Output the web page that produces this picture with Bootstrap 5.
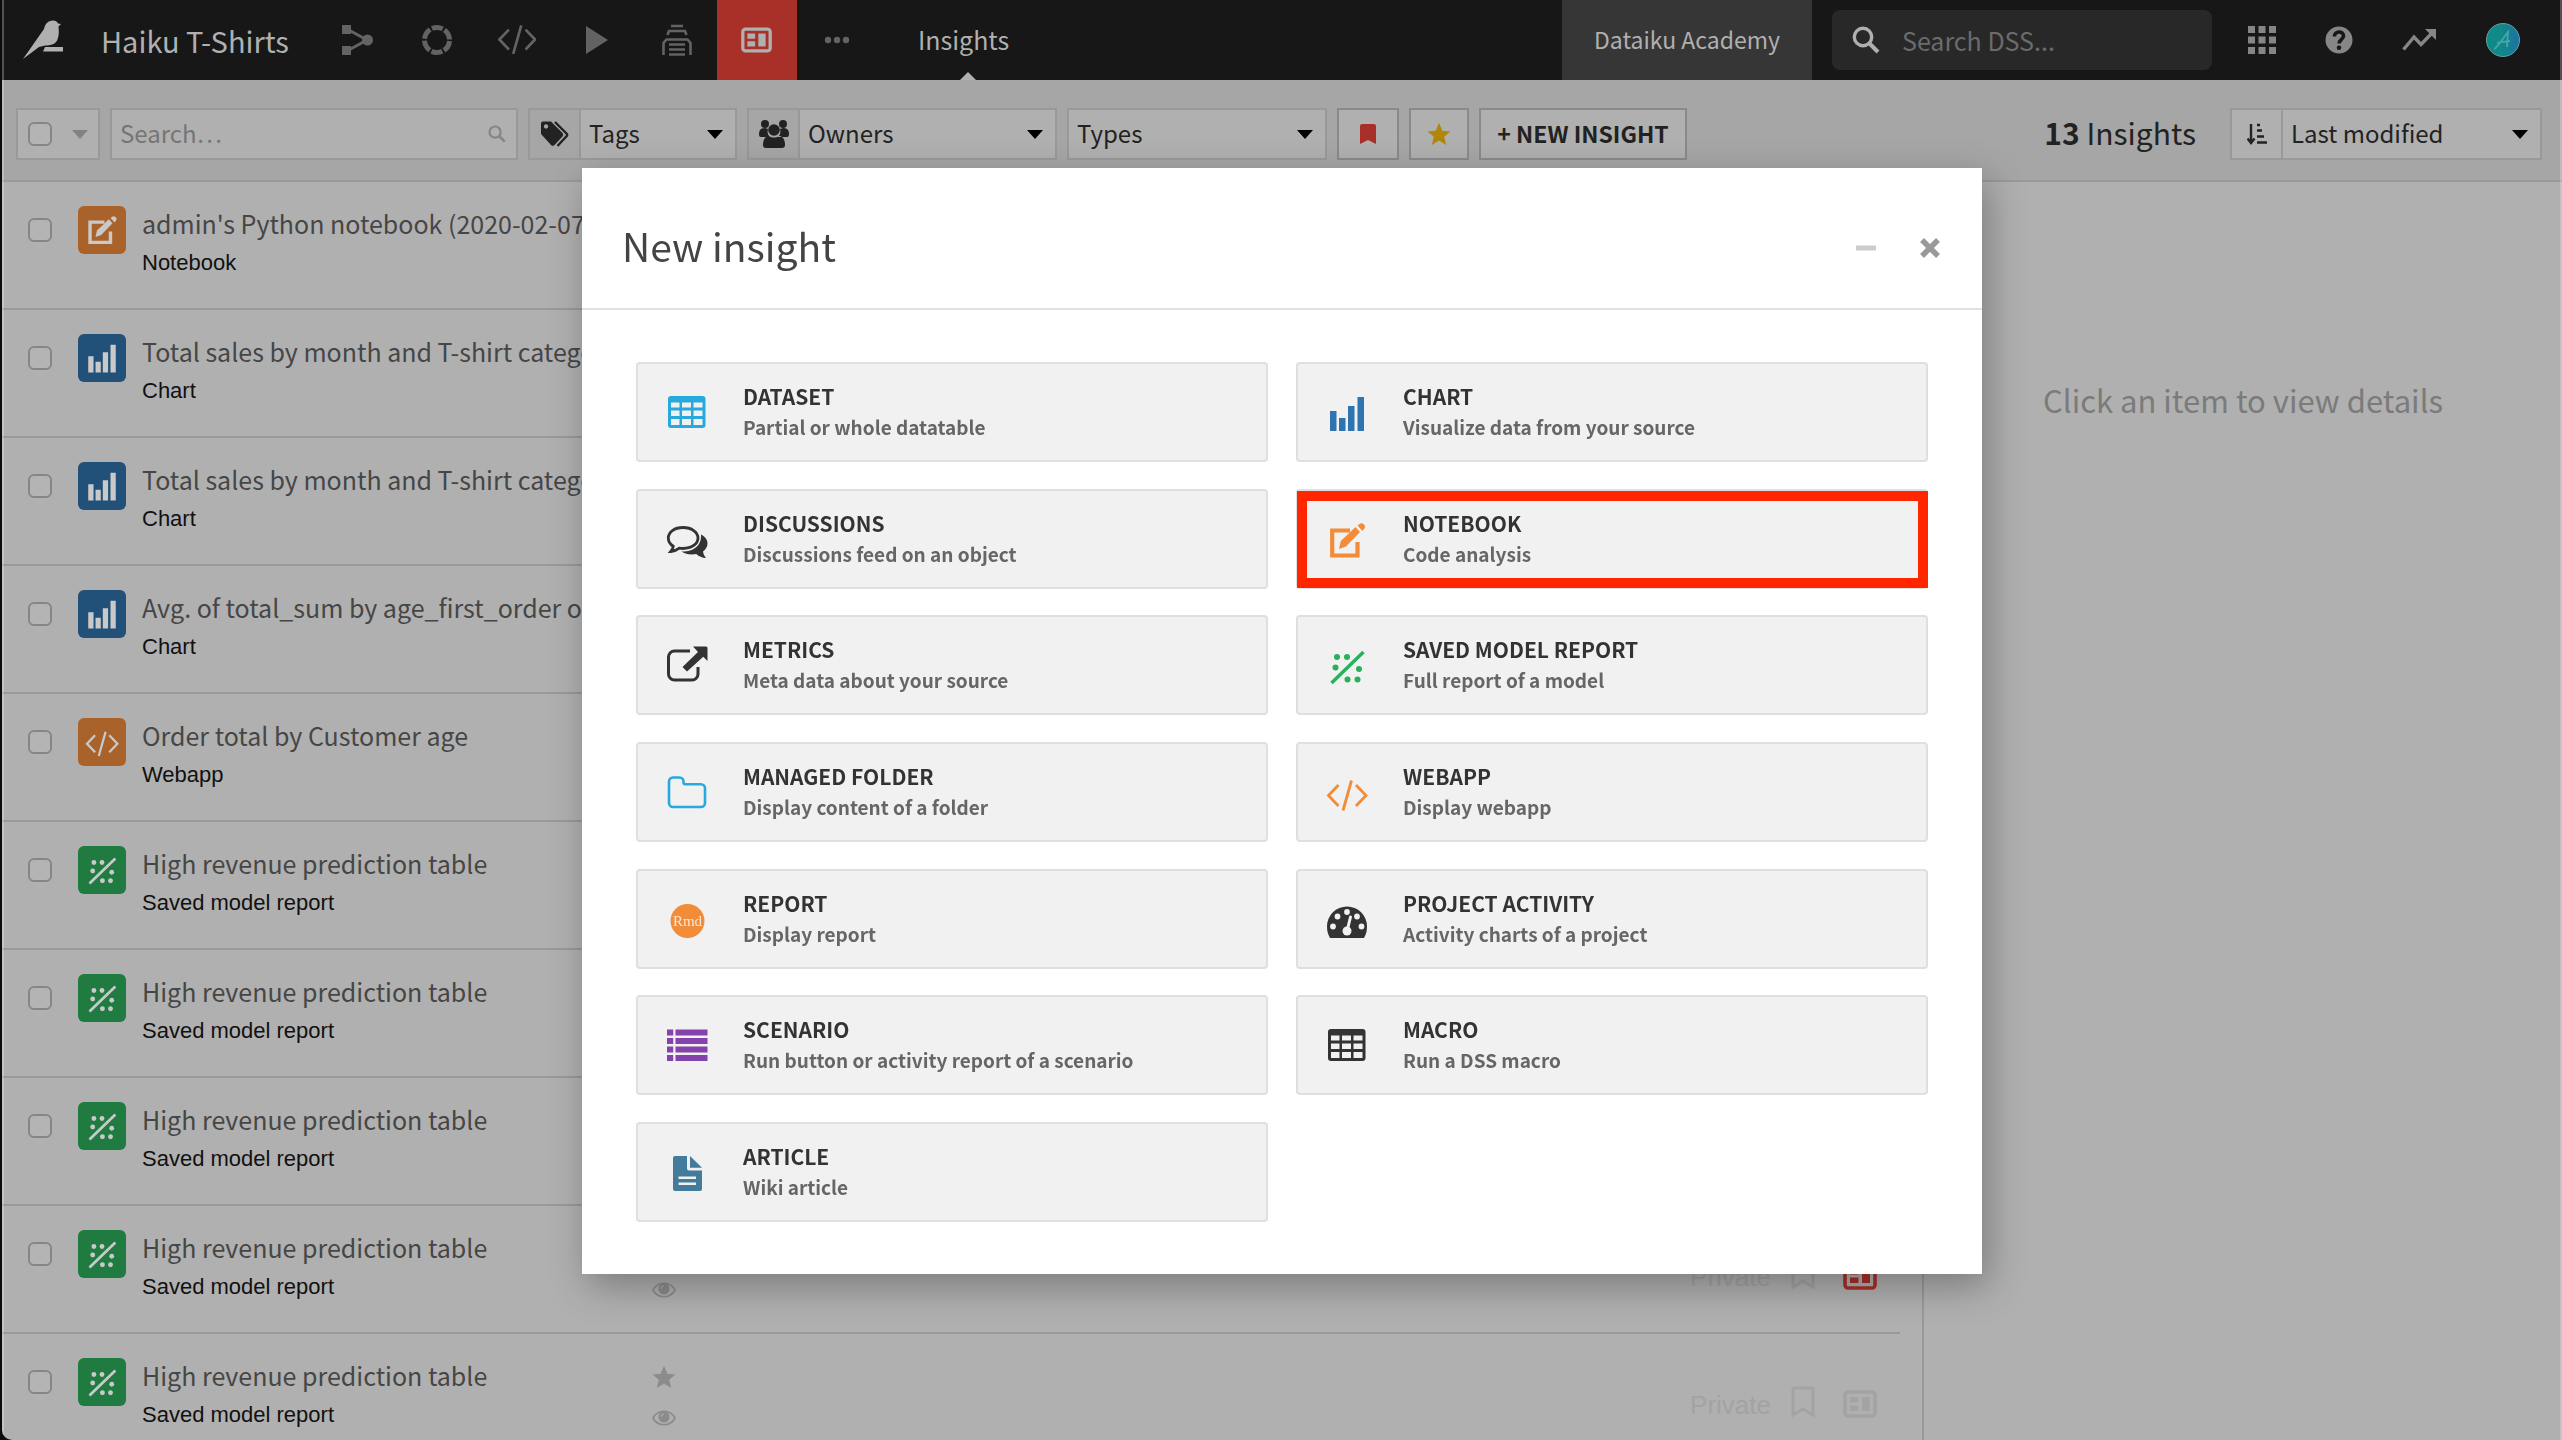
<!DOCTYPE html>
<html lang="en">
<head>
<meta charset="utf-8">
<meta name="viewport" content="width=device-width, initial-scale=1">
<title>Haiku T-Shirts - Insights</title>
<link href="https://cdn.jsdelivr.net/npm/bootstrap@5.3.0/dist/css/bootstrap.min.css" rel="stylesheet">
<style>
:root{--ui:"Noto Sans CJK SC","Noto Sans",sans-serif;--plain:"Liberation Sans",Arial,sans-serif;--line:#999;--pane:#b0b0b0;--bar:#a6a6a6;--ink:#222;--soft:#464646;--bright:#b0b0b0;--dim:#636363;--orange:#f28c38;--blue:#2e75b0;--green:#28b15c}
body{margin:0;background:#0c0c0c;font-family:var(--ui);color:var(--ink);overflow:hidden}
svg{display:block;flex:none}
.shell{position:relative;height:100vh;margin-left:2px;background:var(--pane);overflow:hidden;border-bottom-left-radius:10px}
.shell::after{content:"";position:absolute;inset:0;border:solid rgba(255,255,255,.25);border-width:0 2px;pointer-events:none}
/* top bar */
.topbar{height:80px;background:#171717;color:var(--bright);padding:0}
.topbar a{color:inherit;text-decoration:none}
.brand-link{padding:0 28px 0 20px;gap:37px;font-size:29px;line-height:40px}
.tab-link{width:80px;height:80px;color:var(--dim)!important}
.tab-link.current{background:#a93028;color:var(--bright)!important}
.section-link{position:relative;margin-left:41px;font-size:25px;line-height:78px;height:80px}
.section-link::after{content:"";position:absolute;left:50%;bottom:0;margin-left:-4px;border:8px solid transparent;border-top:0;border-bottom-color:var(--bright)}
.academy{background:#363636;padding:0 32px;font-size:23px;line-height:78px;height:80px}
.dss-search{width:380px;height:60px;margin:0 36px 0 20px;padding:0 20px;gap:22px;background:#282828;border-radius:8px}
.dss-search input,.find-box input{background:transparent;border:0;outline:0;padding:0;min-width:0;color:var(--ink);font-family:var(--ui)}
.dss-search input{font-size:25px;line-height:36px;color:var(--bright)}
.dss-search input::placeholder{color:#6b6b6b;opacity:1}
.tool-links{gap:49px;padding-right:41px;color:#868686}
/* filter bar */
.filterbar{background:var(--bar);padding:28px 20px 20px 14px;gap:10px;border-bottom:2px solid var(--line)}
.ctl{height:52px;border:2px solid var(--line);background:var(--pane);border-radius:0;color:var(--ink);font-size:24px;line-height:36px;font-family:var(--ui);padding:0}
.ctl.strong-edge{border-color:#8a8a8a}
.pick-all{gap:20px;padding:0 10px}
.find-box{width:408px;padding:0 10px 0 8px}
.find-box input{font-size:24px;line-height:36px;padding-bottom:2px}
.find-box input::placeholder{color:#757575;opacity:1}
.addon{width:51px;background:var(--bar);border-right:0}
.pick{appearance:none;padding:0 40px 2px 8px;background:var(--pane) url("data:image/svg+xml,%3Csvg xmlns='http://www.w3.org/2000/svg' viewBox='0 0 16 9'%3E%3Cpath d='M0 0h16L8 9z'/%3E%3C/svg%3E") no-repeat right 12px center/16px 9px}
.tick{appearance:none;flex:none;width:24px;height:24px;margin:0;border:2px solid #868686;border-radius:6px;background:#b4b4b4}
.new-btn{width:208px;font-size:23px;font-weight:700;line-height:36px;padding-bottom:2px}
.total{font-size:30px;line-height:44px;margin-right:24px;padding-bottom:4px}
/* list */
.main-row{height:calc(100vh - 182px)}
.items{padding:0 22px 0 0}
.item{height:128px;border-bottom:2px solid var(--line);padding:24px 23px 0 26px}
.item .tick{margin-top:12px}
.tile{width:48px;height:48px;border-radius:6px;color:#c9c9c9;margin-left:26px;padding-top:6px}
.t-orange{background:#a9622a}.t-blue{background:#215079}.t-green{background:#207b41}
.item-text{width:510px;margin-left:16px}
.item-name{font-size:25px;line-height:34px;color:var(--soft);text-decoration:none;display:block}
.item-kind{font-family:var(--plain);font-size:22px;line-height:46px;color:#111}
.marks{color:#8b8b8b;padding-top:7px;gap:21px}
.states{font-family:var(--plain);font-size:26px;line-height:26px;color:#a3a3a3;padding-top:28px;gap:20px}
.details{border-left:2px solid var(--line);padding-top:196px;font-size:31px;line-height:44px;color:#7b7b7b}
/* dialog */
.modal{padding-left:2px;overflow:hidden}
.modal-dialog{max-width:1400px;margin:168px auto 0}
.modal-content{border:0;border-radius:0;box-shadow:6px 12px 36px rgba(0,0,0,.3);color:#333}
.modal-header{height:142px;padding:20px 42px 0 40px;border-bottom:2px solid #e0e0e0;border-radius:0}
.modal-title{font-size:39px;font-weight:400;line-height:56px;color:#444;padding-bottom:6px}
.head-btn{background:none;border:0;padding:0;color:#999}
.head-btns{gap:44px}
.kinds{display:grid;grid-template-columns:1fr 1fr;column-gap:28px;align-content:space-between;min-height:860px;margin:52px 54px}
.kind{position:relative;height:100px;border:2px solid #dfdfdf;border-radius:4px;background:#f1f1f1;padding:0 28px;gap:35px;text-align:left;color:#333}
.kind-text{padding-bottom:2px}
.kind-name{font-size:21px;line-height:32px;font-weight:700}
.kind-note{font-size:19px;line-height:30px;font-weight:700;color:#666}
.kind.picked::after{content:"";position:absolute;inset:0 -2px -1px -1px;border:10px solid #ff2600}
.c-sky{color:#28a9dd}.c-blue{color:var(--blue)}.c-orange{color:var(--orange)}.c-green{color:var(--green)}.c-purple{color:#8541ac}.c-teal{color:#437c9b}
</style>
<script src="https://cdn.jsdelivr.net/npm/bootstrap@5.3.0/dist/js/bootstrap.bundle.min.js"></script>
</head>
<body>
<svg width="0" height="0" class="position-absolute" aria-hidden="true">
  <symbol id="edit" viewBox="0 0 42 42"><path d="M24 12.500H6.200V37.500H31.500V24" fill="none" stroke="currentColor" stroke-width="4.200"/><path d="M13 31l1.800-8L29.500 9l4.500 5L20 28.500z" fill="currentColor"/><path d="M31.500 7.500l1.500-1a3.200 3.200 0 0 1 5 4.500l-1.500 2z" fill="currentColor"/></symbol>
  <symbol id="bars" viewBox="0 0 42 42"><path d="M4 20h6.500v20H4zM13 27h6.500v13H13zM22 15h6.500v25H22zM31.500 6H38v34h-6.500z" fill="currentColor"/></symbol>
  <symbol id="code" viewBox="0 0 42 42"><path d="M12.500 14L2.500 24.500l10 10.500M30 14l10 10.500L30 35M25.500 9.500L17 39.500" fill="none" stroke="currentColor" stroke-width="2.800"/></symbol>
  <symbol id="model" viewBox="0 0 42 42"><path d="M5.500 39L37.500 8" stroke="currentColor" stroke-width="3.400"/><g fill="currentColor"><circle cx="11" cy="13" r="3"/><circle cx="21" cy="13" r="3"/><circle cx="9.500" cy="23.500" r="3"/><circle cx="33" cy="25" r="3"/><circle cx="21.500" cy="35.500" r="3"/><circle cx="31.500" cy="35.500" r="3"/></g></symbol>
  <symbol id="grid" viewBox="0 0 42 42"><path fill-rule="evenodd" fill="currentColor" d="M5 5h31.500a3 3 0 0 1 3 3v26a3 3 0 0 1-3 3H5a3 3 0 0 1-3-3V8a3 3 0 0 1 3-3zM5 11.500v5h8.500v-5zm11 0v5h9v-5zm11.500 0v5h9v-5zM5 19.500V25h8.500v-5.500zm11 0V25h9v-5.500zm11.500 0V25h9v-5.500zM5 28v6h8.500v-6zm11 0v6h9v-6zm11.500 0v6h9v-6z"/></symbol>
  <symbol id="talk" viewBox="0 0 42 42"><path d="M17 9.500c8.500 0 15 4.600 15 10.500S25.500 30.500 17 30.500c-1.300 0-2.500-.1-3.700-.3C11 32 8 33.400 4.800 33.500c1.300-1.500 2.300-3 2.500-5.300C4 26.300 2.300 23.400 2.300 20 2.300 14.100 8.500 9.500 17 9.500z" fill="none" stroke="currentColor" stroke-width="2.800"/><path d="M35 16.500c4 2 6.500 5.200 6.500 9 0 3.500-2 6-4.500 8 .3 2.500 1.500 4.500 3 6.500-4-.2-7-1.500-9.700-4-6 1-11 0-14.800-2.500C26 34 36 28.500 35 16.500z" fill="currentColor"/></symbol>
  <symbol id="share" viewBox="0 0 42 42"><path d="M24 7H8.500A6 6 0 0 0 2.500 13v17a6 6 0 0 0 6 6H26a6 6 0 0 0 6-6v-7" fill="none" stroke="currentColor" stroke-width="3"/><path d="M27 2.500h13a1.500 1.500 0 0 1 1.500 1.500v13l-4.200-4.200L21 27.500 16.500 23 32 8z" fill="currentColor"/></symbol>
  <symbol id="folder" viewBox="0 0 42 42"><path d="M7 6.500h6.500a4 4 0 0 1 4 4v1.200a1.500 1.500 0 0 0 1.500 1.500h16a4 4 0 0 1 4 4V32a4 4 0 0 1-4 4H7a4 4 0 0 1-4-4V10.500a4 4 0 0 1 4-4z" fill="none" stroke="currentColor" stroke-width="2.600"/></symbol>
  <symbol id="gauge" viewBox="0 0 42 42"><path d="M21 8.500a20 20 0 0 1 20 20c0 4.500-1 8-3 11.500H4c-2-3.500-3-7-3-11.500a20 20 0 0 1 20-20z" fill="currentColor"/><g fill="#f1f1f1"><circle cx="7" cy="28.500" r="2.900"/><circle cx="11.500" cy="18.500" r="2.900"/><circle cx="21" cy="14" r="2.900"/><circle cx="31" cy="18.500" r="2.900"/><circle cx="35.500" cy="28.500" r="2.900"/><circle cx="21" cy="33" r="4.500"/></g><path d="M21.500 31l3-12" stroke="#f1f1f1" stroke-width="3" stroke-linecap="round"/></symbol>
  <symbol id="rows" viewBox="0 0 42 42"><path d="M1 5.500h6.200v6H1zM9.500 5.500h32v6h-32zM1 14h6.200v6H1zM9.500 14h32v6h-32zM1 22.500h6.200v6H1zM9.500 22.500h32v6h-32zM1 31h6.200v6H1zM9.500 31h32v6h-32z" fill="currentColor"/></symbol>
  <symbol id="page" viewBox="0 0 42 42"><path fill-rule="evenodd" fill="currentColor" d="M9 5h12v12.500a2 2 0 0 0 2 2h13V38a2 2 0 0 1-2 2H9a2 2 0 0 1-2-2V7a2 2 0 0 1 2-2zM12.500 25.500V28H30v-2.500zm0 6V34H30v-2.500zM24 5l12 11.800H24z"/></symbol>
  <symbol id="board" viewBox="0 0 34 28"><rect x="2" y="2" width="30" height="24" rx="3" fill="none" stroke="currentColor" stroke-width="3.600"/><path d="M7 7h8.500v5.500H7zM7 15.500h8.500V21H7zM19 7h8v14h-8z" fill="currentColor"/></symbol>
  <symbol id="star" viewBox="0 0 24 24"><path d="M12 .8l3.300 7.900 8.200.7-6.300 5.400 2 8.200-7.200-4.500L4.800 23l2-8.200L.500 9.400l8.200-.7z" fill="currentColor"/></symbol>
  <symbol id="eye" viewBox="0 0 24 16"><path d="M1 8c5-9 17-9 22 0-5 9-17 9-22 0z" fill="none" stroke="currentColor" stroke-width="1.600"/><circle cx="12" cy="7" r="5.600" fill="currentColor"/><path d="M9 7a3 3 0 0 1 3-3" stroke="#b0b0b0" fill="none"/></symbol>
  <symbol id="ribbon" viewBox="0 0 24 32"><path d="M2 29V4a2 2 0 0 1 2-2h16a2 2 0 0 1 2 2v25l-10-6z" fill="none" stroke="currentColor" stroke-width="3"/></symbol>
  <symbol id="lens" viewBox="0 0 28 28"><circle cx="11" cy="11" r="8.700" fill="none" stroke="currentColor" stroke-width="3.400"/><path d="M17 17l9 9" stroke="currentColor" stroke-width="4"/></symbol>
</svg>

<div class="shell d-flex flex-column">
  <nav class="topbar d-flex align-items-center flex-shrink-0" aria-label="Main">
    <a href="#" class="brand-link d-flex align-items-center">
      <svg width="42" height="40" viewBox="0 0 42 40"><path d="M1 39L22 9c1-5 4-8.500 9-8.500 3 0 4.500 1.500 5 3l3 .5-2.500 2.500c.5 5 .5 9-1 13C34 24 29 25.500 23 25.500L17 27z" fill="currentColor"/><path d="M23 27h18v4.500H21z" fill="currentColor"/></svg>
      <span>Haiku T-Shirts</span>
    </a>
    <a href="#" class="tab-link d-flex align-items-center justify-content-center" aria-label="Flow"><svg width="36" height="32" viewBox="0 0 36 32"><path d="M3 1h9v9H3zM3 22h9v9H3z" fill="currentColor"/><circle cx="28.500" cy="16" r="5.500" fill="currentColor"/><path d="M8 5l20 11L8 27" fill="none" stroke="currentColor" stroke-width="3"/></svg></a>
    <a href="#" class="tab-link d-flex align-items-center justify-content-center" aria-label="Lab"><svg width="32" height="32" viewBox="0 0 32 32"><circle cx="16" cy="16" r="12.500" fill="none" stroke="currentColor" stroke-width="5" stroke-dasharray="11.090 2" stroke-dashoffset="-1"/></svg></a>
    <a href="#" class="tab-link d-flex align-items-center justify-content-center" aria-label="Notebooks"><svg width="38" height="38" viewBox="1 5 40 40"><use href="#code" width="42" height="42"/></svg></a>
    <a href="#" class="tab-link d-flex align-items-center justify-content-center" aria-label="Jobs"><svg width="22" height="28" viewBox="0 0 22 28"><path d="M0 0l22 14L0 28z" fill="currentColor"/></svg></a>
    <a href="#" class="tab-link d-flex align-items-center justify-content-center" aria-label="Deployer"><svg width="30" height="32" viewBox="0 0 30 32"><path d="M9 2h12M5.500 11l1.500-4h16l1.500 4M1.500 31V19l3-3.500h21l3 3.500v12M7 20.500h16M7 25.500h16M7 30.500h16" fill="none" stroke="currentColor" stroke-width="2.600"/></svg></a>
    <a href="#" class="tab-link current d-flex align-items-center justify-content-center" aria-label="Dashboards"><svg width="31" height="26"><use href="#board"/></svg></a>
    <a href="#" class="tab-link d-flex align-items-center justify-content-center" aria-label="More"><svg width="26" height="8" viewBox="0 0 26 8" fill="currentColor"><circle cx="4" cy="4" r="3.200"/><circle cx="13" cy="4" r="3.200"/><circle cx="22" cy="4" r="3.200"/></svg></a>
    <a href="#" class="section-link" aria-current="page">Insights</a>
    <a href="#" class="academy ms-auto">Dataiku Academy</a>
    <div class="dss-search d-flex align-items-center"><svg width="28" height="28"><use href="#lens"/></svg><input type="search" placeholder="Search DSS..." aria-label="Search DSS"></div>
    <div class="tool-links d-flex align-items-center">
      <a href="#" aria-label="Applications"><svg width="28" height="28" viewBox="0 0 28 28" fill="currentColor"><path d="M0 0h7v7H0zM10.500 0h7v7h-7zM21 0h7v7h-7zM0 10.500h7v7H0zM10.500 10.500h7v7h-7zM21 10.500h7v7h-7zM0 21h7v7H0zM10.500 21h7v7h-7zM21 21h7v7h-7z"/></svg></a>
      <a href="#" aria-label="Help"><svg width="28" height="28" viewBox="0 0 28 28"><circle cx="14" cy="14" r="13.500" fill="currentColor"/><path d="M9.500 10.500c0-6 9-6 9-.5 0 3.500-4.300 3.500-4.300 7.500" fill="none" stroke="#171717" stroke-width="3.600"/><circle cx="14" cy="21.800" r="2.300" fill="#171717"/></svg></a>
      <a href="#" aria-label="Activity"><svg width="34" height="22" viewBox="0 0 34 22"><path d="M1.500 20.500L12 8l7 7.500L30 4" fill="none" stroke="currentColor" stroke-width="3.400"/><path d="M23 0h11v11z" fill="currentColor"/></svg></a>
      <a href="#" aria-label="Profile"><svg width="36" height="36" viewBox="0 0 36 36"><defs><linearGradient id="av"><stop offset=".4" stop-color="#0f8a86"/><stop offset="1" stop-color="#1d72a4"/></linearGradient></defs><circle cx="18" cy="18" r="16.500" fill="url(#av)" stroke="#6b9c9c" stroke-width="1"/><path d="M9 27c4-2 9-11 14-17l-1 15M12 21c5-2 8-1 13-2" fill="none" stroke="#4aa5a8" stroke-width="1.800"/></svg></a>
    </div>
  </nav>

  <div class="filterbar d-flex align-items-center flex-shrink-0">
    <div class="ctl pick-all d-flex align-items-center"><input type="checkbox" class="tick" aria-label="Select all"><svg width="16" height="9" viewBox="0 0 16 9"><path d="M0 0h16L8 9z" fill="#828282"/></svg></div>
    <div class="ctl find-box d-flex align-items-center"><input class="flex-fill" type="search" placeholder="Search…" aria-label="Search insights"><svg width="18" height="18" color="#858585"><use href="#lens"/></svg></div>
    <div class="d-flex">
      <label for="tags" class="ctl addon d-flex align-items-center justify-content-center" aria-label="Tags"><svg width="30" height="26" viewBox="0 0 30 26"><path fill-rule="evenodd" d="M1 2.500A2 2 0 0 1 3 .5h8L22.500 12a2.500 2.500 0 0 1 0 3.500l-8 8.500a2.500 2.500 0 0 1-3.500 0L1 13zM6 3.300a2.200 2.200 0 1 0 .1 0z" fill="#222"/><path d="M15 1l11.500 11.500a2 2 0 0 1 0 2.800L17.500 25" fill="none" stroke="#222" stroke-width="2.400"/></svg></label>
      <select id="tags" class="ctl pick" style="width:158px"><option>Tags</option></select>
    </div>
    <div class="d-flex">
      <label for="owners" class="ctl addon d-flex align-items-center justify-content-center" aria-label="Owners"><svg width="32" height="28" viewBox="0 0 32 28" fill="#222"><circle cx="7" cy="4" r="4"/><circle cx="25" cy="4" r="4"/><circle cx="16" cy="10" r="5.800"/><path d="M1 14c0-4 2-6 6-6l3 1c-1 4 0 6 2 8H3c-1.500 0-2-1-2-3zM31 14c0-4-2-6-6-6l-3 1c1 4 0 6-2 8h9c1.500 0 2-1 2-3zM5 25c0-5 2-9 6-9 3 2 7 2 10 0 4 0 6 4 6 9 0 2-1 3-3 3H8c-2 0-3-1-3-3z"/></svg></label>
      <select id="owners" class="ctl pick" style="width:259px"><option>Owners</option></select>
    </div>
    <select class="ctl pick" style="width:260px" aria-label="Types"><option>Types</option></select>
    <button type="button" class="ctl strong-edge d-flex align-items-center justify-content-center" style="width:62px" aria-label="Promoted"><svg width="16" height="20" viewBox="0 0 16 20"><path d="M0 20V2a2 2 0 0 1 2-2h12a2 2 0 0 1 2 2v18l-8-4z" fill="#a93028"/></svg></button>
    <button type="button" class="ctl strong-edge d-flex align-items-center justify-content-center" style="width:60px" aria-label="Starred"><svg width="24" height="24" color="#b18609"><use href="#star"/></svg></button>
    <button type="button" class="ctl strong-edge new-btn">+ NEW INSIGHT</button>
    <div class="total ms-auto"><b>13</b> Insights</div>
    <div class="d-flex">
      <button type="button" class="ctl addon border-end-0 d-flex align-items-center justify-content-center" style="background:var(--pane)" aria-label="Sort order"><svg width="20" height="22" viewBox="0 0 20 22"><path d="M4 1v18M.500 15.500L4 20l3.500-4.500M10 2h3M10 7.500h5M10 13.500h7M10 19.500h10" fill="none" stroke="#222" stroke-width="2.400"/></svg></button>
      <select class="ctl pick" style="width:261px" aria-label="Sort by"><option>Last modified</option></select>
    </div>
  </div>

  <div class="row g-0 main-row">
    <main class="items col-9">
      <div class="item d-flex align-items-start"><input type="checkbox" class="tick" aria-label="Select"><div class="tile t-orange d-flex justify-content-center"><svg width="34" height="34"><use href="#edit"/></svg></div><div class="item-text"><a href="#" class="item-name text-truncate">admin's Python notebook (2020-02-07)</a><div class="item-kind">Notebook</div></div></div>
      <div class="item d-flex align-items-start"><input type="checkbox" class="tick" aria-label="Select"><div class="tile t-blue d-flex justify-content-center"><svg width="34" height="34"><use href="#bars"/></svg></div><div class="item-text"><a href="#" class="item-name text-truncate">Total sales by month and T-shirt category</a><div class="item-kind">Chart</div></div></div>
      <div class="item d-flex align-items-start"><input type="checkbox" class="tick" aria-label="Select"><div class="tile t-blue d-flex justify-content-center"><svg width="34" height="34"><use href="#bars"/></svg></div><div class="item-text"><a href="#" class="item-name text-truncate">Total sales by month and T-shirt category</a><div class="item-kind">Chart</div></div></div>
      <div class="item d-flex align-items-start"><input type="checkbox" class="tick" aria-label="Select"><div class="tile t-blue d-flex justify-content-center"><svg width="34" height="34"><use href="#bars"/></svg></div><div class="item-text"><a href="#" class="item-name text-truncate">Avg. of total_sum by age_first_order on</a><div class="item-kind">Chart</div></div></div>
      <div class="item d-flex align-items-start"><input type="checkbox" class="tick" aria-label="Select"><div class="tile t-orange d-flex justify-content-center"><svg width="34" height="34"><use href="#code"/></svg></div><div class="item-text"><a href="#" class="item-name text-truncate">Order total by Customer age</a><div class="item-kind">Webapp</div></div></div>
      <div class="item d-flex align-items-start"><input type="checkbox" class="tick" aria-label="Select"><div class="tile t-green d-flex justify-content-center"><svg width="34" height="34"><use href="#model"/></svg></div><div class="item-text"><a href="#" class="item-name text-truncate">High revenue prediction table</a><div class="item-kind">Saved model report</div></div></div>
      <div class="item d-flex align-items-start"><input type="checkbox" class="tick" aria-label="Select"><div class="tile t-green d-flex justify-content-center"><svg width="34" height="34"><use href="#model"/></svg></div><div class="item-text"><a href="#" class="item-name text-truncate">High revenue prediction table</a><div class="item-kind">Saved model report</div></div></div>
      <div class="item d-flex align-items-start"><input type="checkbox" class="tick" aria-label="Select"><div class="tile t-green d-flex justify-content-center"><svg width="34" height="34"><use href="#model"/></svg></div><div class="item-text"><a href="#" class="item-name text-truncate">High revenue prediction table</a><div class="item-kind">Saved model report</div></div></div>
      <div class="item d-flex align-items-start"><input type="checkbox" class="tick" aria-label="Select"><div class="tile t-green d-flex justify-content-center"><svg width="34" height="34"><use href="#model"/></svg></div><div class="item-text"><a href="#" class="item-name text-truncate">High revenue prediction table</a><div class="item-kind">Saved model report</div></div>
        <div class="marks d-flex flex-column"><svg width="24" height="24"><use href="#star"/></svg><svg width="24" height="16"><use href="#eye"/></svg></div>
        <div class="states ms-auto d-flex align-items-end"><span>Private</span><svg width="24" height="32"><use href="#ribbon"/></svg><svg class="ms-2" width="34" height="28" color="#a93028"><use href="#board"/></svg></div></div>
      <div class="item d-flex align-items-start"><input type="checkbox" class="tick" aria-label="Select"><div class="tile t-green d-flex justify-content-center"><svg width="34" height="34"><use href="#model"/></svg></div><div class="item-text"><a href="#" class="item-name text-truncate">High revenue prediction table</a><div class="item-kind">Saved model report</div></div>
        <div class="marks d-flex flex-column"><svg width="24" height="24"><use href="#star"/></svg><svg width="24" height="16"><use href="#eye"/></svg></div>
        <div class="states ms-auto d-flex align-items-end"><span>Private</span><svg width="24" height="32"><use href="#ribbon"/></svg><svg class="ms-2" width="34" height="28"><use href="#board"/></svg></div></div>
    </main>
    <aside class="details col-3 text-center">Click an item to view details</aside>
  </div>
</div>

<div class="modal d-block" role="dialog" aria-labelledby="dlg-title">
  <div class="modal-dialog">
    <div class="modal-content">
      <div class="modal-header d-flex align-items-center">
        <h1 class="modal-title" id="dlg-title">New insight</h1>
        <div class="head-btns d-flex align-items-center">
          <button type="button" class="head-btn" aria-label="Minimize"><svg width="20" height="20" viewBox="0 0 20 20"><path d="M0 7.500h20v5H0z" fill="#ccc"/></svg></button>
          <button type="button" class="head-btn" aria-label="Close"><svg width="20" height="20" viewBox="0 0 20 20"><path d="M2 2l16 16M18 2L2 18" stroke="currentColor" stroke-width="5.500"/></svg></button>
        </div>
      </div>
      <div class="kinds">
        <button type="button" class="kind d-flex align-items-center"><svg class="c-sky" width="42" height="42"><use href="#grid"/></svg><span class="kind-text"><span class="kind-name d-block">DATASET</span><span class="kind-note d-block">Partial or whole datatable</span></span></button>
        <button type="button" class="kind d-flex align-items-center"><svg class="c-blue" width="42" height="42"><use href="#bars"/></svg><span class="kind-text"><span class="kind-name d-block">CHART</span><span class="kind-note d-block">Visualize data from your source</span></span></button>
        <button type="button" class="kind d-flex align-items-center"><svg width="42" height="42"><use href="#talk"/></svg><span class="kind-text"><span class="kind-name d-block">DISCUSSIONS</span><span class="kind-note d-block">Discussions feed on an object</span></span></button>
        <button type="button" class="kind picked d-flex align-items-center"><svg class="c-orange" width="42" height="42"><use href="#edit"/></svg><span class="kind-text"><span class="kind-name d-block">NOTEBOOK</span><span class="kind-note d-block">Code analysis</span></span></button>
        <button type="button" class="kind d-flex align-items-center"><svg width="42" height="42"><use href="#share"/></svg><span class="kind-text"><span class="kind-name d-block">METRICS</span><span class="kind-note d-block">Meta data about your source</span></span></button>
        <button type="button" class="kind d-flex align-items-center"><svg class="c-green" width="42" height="42"><use href="#model"/></svg><span class="kind-text"><span class="kind-name d-block">SAVED MODEL REPORT</span><span class="kind-note d-block">Full report of a model</span></span></button>
        <button type="button" class="kind d-flex align-items-center"><svg class="c-sky" width="42" height="42"><use href="#folder"/></svg><span class="kind-text"><span class="kind-name d-block">MANAGED FOLDER</span><span class="kind-note d-block">Display content of a folder</span></span></button>
        <button type="button" class="kind d-flex align-items-center"><svg class="c-orange" width="42" height="42"><use href="#code"/></svg><span class="kind-text"><span class="kind-name d-block">WEBAPP</span><span class="kind-note d-block">Display webapp</span></span></button>
        <button type="button" class="kind d-flex align-items-center"><svg class="c-orange" width="42" height="42" viewBox="0 0 42 42"><circle cx="21.500" cy="23" r="17" fill="currentColor"/><text x="21.500" y="28" text-anchor="middle" font-family="Liberation Serif, serif" font-size="15" fill="#f7e6d6">Rmd</text></svg><span class="kind-text"><span class="kind-name d-block">REPORT</span><span class="kind-note d-block">Display report</span></span></button>
        <button type="button" class="kind d-flex align-items-center"><svg width="42" height="42"><use href="#gauge"/></svg><span class="kind-text"><span class="kind-name d-block">PROJECT ACTIVITY</span><span class="kind-note d-block">Activity charts of a project</span></span></button>
        <button type="button" class="kind d-flex align-items-center"><svg class="c-purple" width="42" height="42"><use href="#rows"/></svg><span class="kind-text"><span class="kind-name d-block">SCENARIO</span><span class="kind-note d-block">Run button or activity report of a scenario</span></span></button>
        <button type="button" class="kind d-flex align-items-center"><svg width="42" height="42"><use href="#grid"/></svg><span class="kind-text"><span class="kind-name d-block">MACRO</span><span class="kind-note d-block">Run a DSS macro</span></span></button>
        <button type="button" class="kind d-flex align-items-center"><svg class="c-teal" width="42" height="42"><use href="#page"/></svg><span class="kind-text"><span class="kind-name d-block">ARTICLE</span><span class="kind-note d-block">Wiki article</span></span></button>
      </div>
    </div>
  </div>
</div>
</body>
</html>
